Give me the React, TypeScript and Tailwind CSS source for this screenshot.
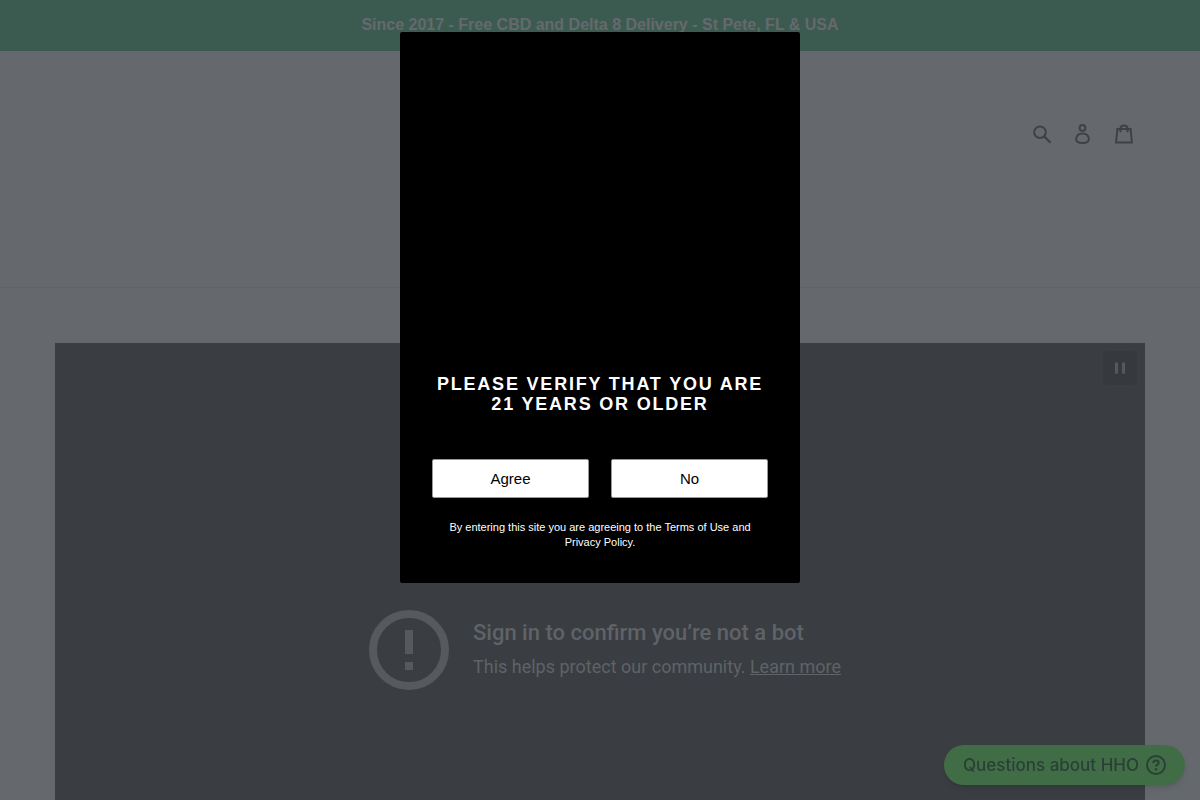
import { useState } from 'react';

function SearchIcon() {
  return (
    <svg viewBox="0 0 20 20" className="h-5 w-5" fill="none" stroke="currentColor" strokeWidth="2" aria-hidden="true">
      <circle cx="8" cy="8.200" r="5.800" />
      <path d="M12.200 12.400l6.400 6.400" strokeWidth="2.200" />
    </svg>
  );
}

function AccountIcon() {
  return (
    <svg viewBox="0 0 20 20" className="h-5 w-5" fill="none" stroke="currentColor" strokeWidth="2" aria-hidden="true">
      <circle cx="9.500" cy="3.900" r="2.900" />
      <path d="M9.500 9.400c-3.800 0-6.400 2.600-6.400 5.800 0 2.600 2.200 3.700 6.400 3.700s6.400-1.100 6.400-3.700c0-3.200-2.600-5.800-6.400-5.800z" />
    </svg>
  );
}

function BagIcon() {
  return (
    <svg viewBox="0 0 20 20" className="h-5 w-5" fill="none" stroke="currentColor" strokeWidth="2" aria-hidden="true">
      <path d="M3.400 4.900h13.200l1.300 13.500H2.100z" />
      <path d="M6.500 8.200V4.400C6.500 2.500 8 1.500 10 1.500s3.500 1 3.500 2.900v3.800" />
    </svg>
  );
}

const headerActions = [
  { label: 'Search', Icon: SearchIcon },
  { label: 'Log in', Icon: AccountIcon },
  { label: 'Cart', Icon: BagIcon },
];

function Header() {
  return (
    <header className="flex h-[237px] items-start justify-end border-b border-[#5f6367] px-14 pt-[63px]">
      <nav className="flex gap-px text-[#3e4145]">
        {headerActions.map(({ label, Icon }) => (
          <a key={label} href="#" aria-label={label} className="flex h-10 w-10 items-center justify-center">
            <Icon />
          </a>
        ))}
      </nav>
    </header>
  );
}

function VideoSection() {
  const [paused, setPaused] = useState(false);

  return (
    <section className="relative mx-[55px] mt-[55px] flex aspect-video items-center justify-center bg-[#3a3d41] font-['Roboto',sans-serif] text-[#5f6367]">
      <button
        type="button"
        aria-label={paused ? 'Play video' : 'Pause video'}
        onClick={() => setPaused(!paused)}
        className="absolute top-2 right-2 flex h-[34px] w-[34px] items-center justify-center rounded-sm bg-[#36393d] text-[#55585c]"
      >
        <svg viewBox="0 0 12 14" className="h-3.5 w-3" fill="currentColor" aria-hidden="true">
          {paused ? (
            <path d="M1 1l10 6-10 6z" />
          ) : (
            <>
              <rect x="1" y="1" width="3" height="12" rx="1.500" />
              <rect x="8" y="1" width="3" height="12" rx="1.500" />
            </>
          )}
        </svg>
      </button>

      <div className="flex items-center gap-6 pl-2.5">
        <svg viewBox="0 0 80 80" className="h-20 w-20 text-[#57595e]" aria-hidden="true">
          <circle cx="40" cy="40" r="36" fill="none" stroke="currentColor" strokeWidth="8" />
          <path d="M36 20h8v24h-8zM36 52h8v8h-8z" fill="currentColor" />
        </svg>
        <div>
          <h2 className="text-[22px] leading-8 font-medium">Sign in to confirm you’re not a bot</h2>
          <p className="mt-0.5 text-lg leading-8">
            This helps protect our community.{' '}
            <a href="#" className="underline">
              Learn more
            </a>
          </p>
        </div>
      </div>
    </section>
  );
}

function HelpButton() {
  return (
    <button
      type="button"
      className="fixed right-[15px] bottom-[15px] flex h-10 items-center gap-[7px] rounded-full bg-[#416d46] px-[19px] font-['Inter',sans-serif] text-[17px] font-medium text-[#2a4036] shadow-md"
    >
      <span className="pt-0.5">Questions about HHO</span>
      <svg viewBox="0 0 20 20" className="h-5 w-5" fill="none" stroke="currentColor" strokeWidth="2" aria-hidden="true">
        <circle cx="10" cy="10" r="9" />
        <path d="M7.300 8c0-1.500 1.100-2.500 2.700-2.500s2.700 1 2.700 2.300c0 1.800-2.700 1.900-2.700 3.700" />
        <circle cx="10" cy="14.200" r="1.200" fill="currentColor" stroke="none" />
      </svg>
    </button>
  );
}

const choiceClass = 'h-[39px] rounded-xs border border-[#999] bg-white pt-0.5 text-[15px] text-black';

function AgeGate({ onAgree }: { onAgree: () => void }) {
  return (
    <div className="fixed inset-0 flex items-start justify-center pt-8">
      {/* The empty area above the title is the logo slot. */}
      <div
        role="dialog"
        aria-modal="true"
        aria-labelledby="age-gate-title"
        className="w-[400px] rounded-xs bg-black px-8 pt-[342px] pb-[33px] text-center text-white"
      >
        <h2 id="age-gate-title" className="text-lg leading-5 font-bold tracking-widest uppercase">
          Please verify that you are 21 years or older
        </h2>
        <div className="mt-[45px] grid grid-cols-2 gap-[22px]">
          <button type="button" onClick={onAgree} className={choiceClass}>
            Agree
          </button>
          <button type="button" className={choiceClass}>
            No
          </button>
        </div>
        <p className="mt-[22px] text-[11px] leading-[15px]">
          By entering this site you are agreeing to the Terms of Use and Privacy Policy.
        </p>
      </div>
    </div>
  );
}

export default function App() {
  const [verified, setVerified] = useState(false);

  return (
    <div className="h-screen overflow-hidden bg-[#65696d] font-['Liberation_Sans',Arial,sans-serif]">
      <p className="bg-[#3c5b50] px-4 pt-[13px] pb-3.5 text-center text-base font-bold text-[#65696d]">
        Since 2017 - Free CBD and Delta 8 Delivery - St Pete, FL &amp; USA
      </p>
      <Header />
      <main>
        <VideoSection />
      </main>
      <HelpButton />
      {!verified && <AgeGate onAgree={() => setVerified(true)} />}
    </div>
  );
}
